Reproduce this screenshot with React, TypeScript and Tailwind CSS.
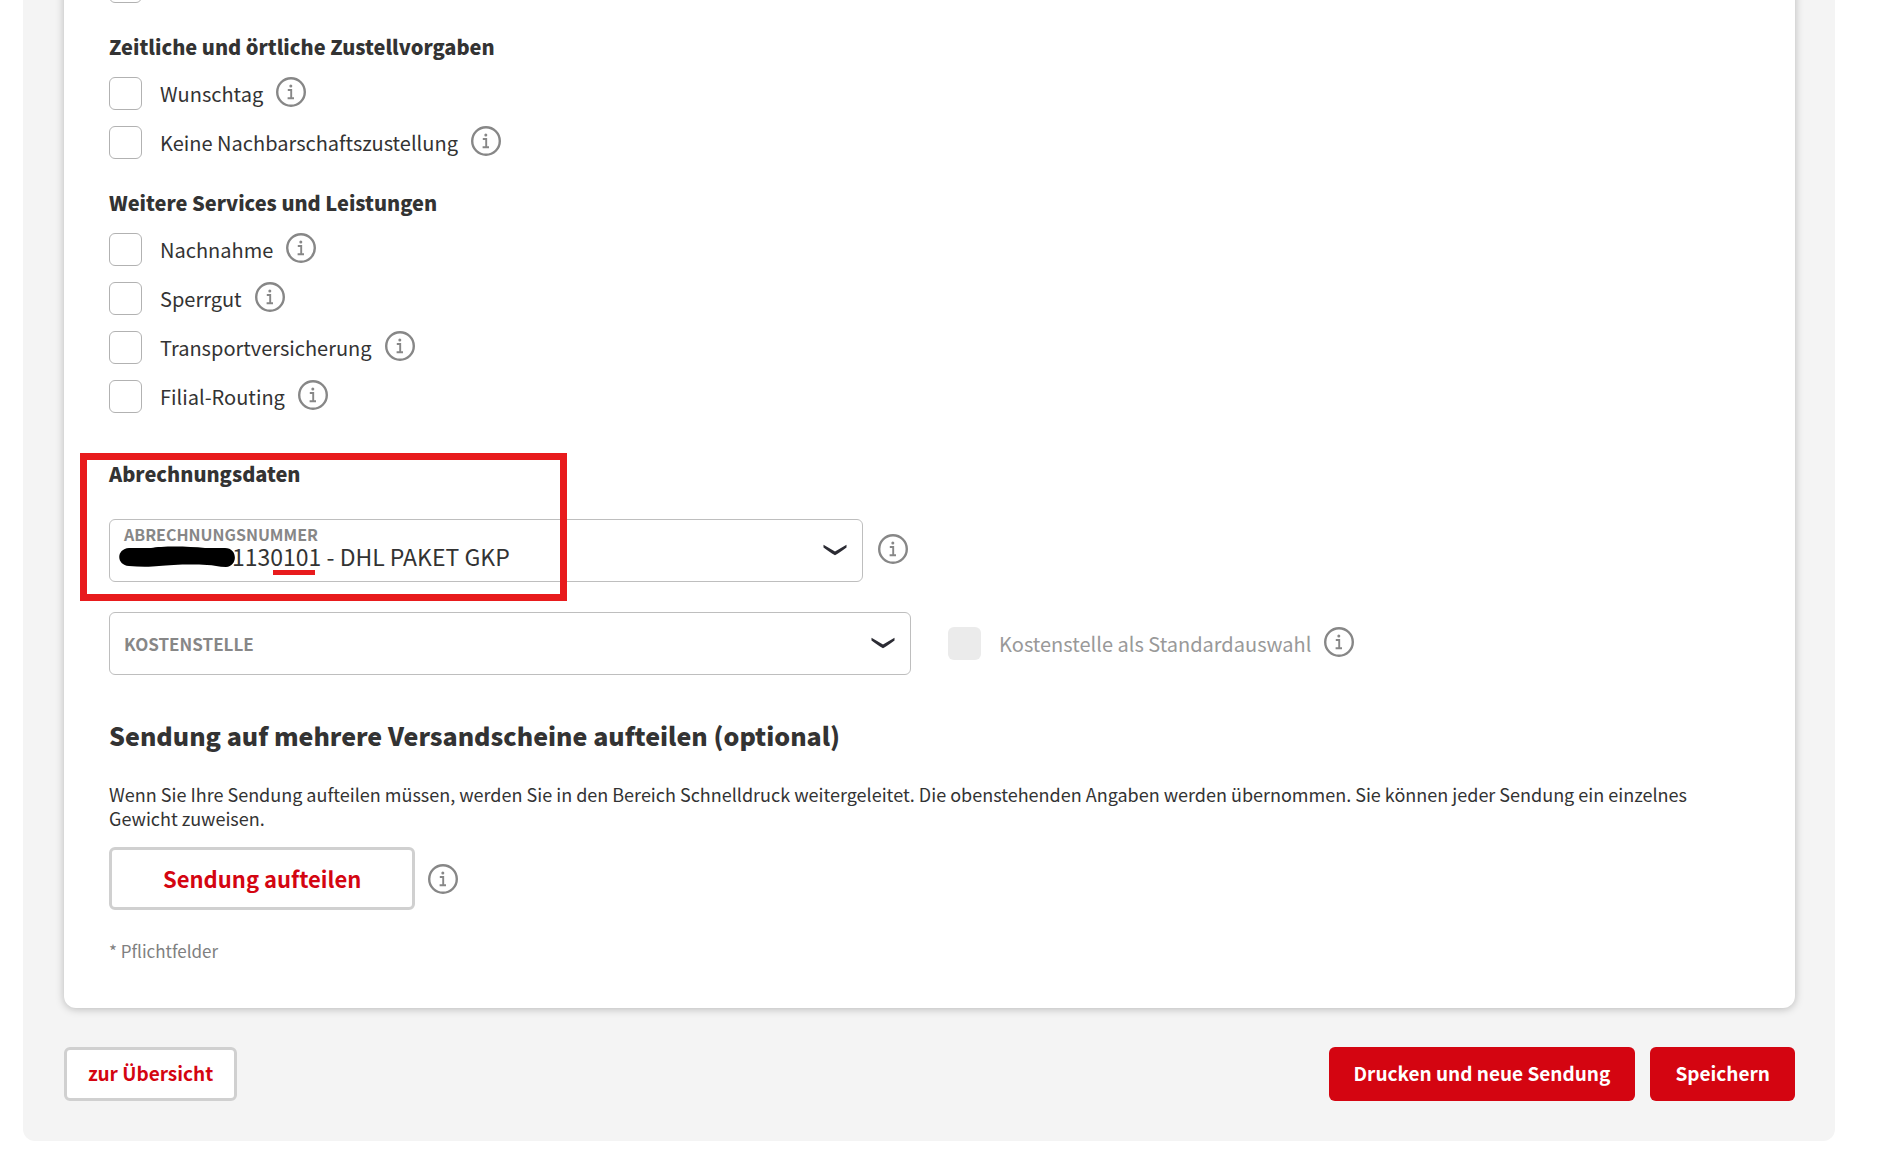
import React, { useId } from "react";

function InfoButton({ topic }: { topic: string }) {
  return (
    <button type="button" aria-label={"Information: " + topic} className="block size-[30px] shrink-0 text-[#878787]">
      <svg viewBox="0 0 30 30" className="block size-[30px]" fill="none">
        <circle cx="15" cy="15" r="13.8" stroke="currentColor" strokeWidth="2.4" />
        <circle cx="14.8" cy="9" r="1.5" fill="currentColor" />
        <path d="M11.800 13H15.2V21.200M11.600 21.200H18" stroke="currentColor" strokeWidth="1.9" />
      </svg>
    </button>
  );
}

function Chevron() {
  return (
    <svg
      viewBox="0 0 24 12"
      className="pointer-events-none absolute top-[25px] right-4 h-3 w-6"
      fill="#2b2b33"
    >
      <path d="M0.500 0.800L12 7.600L23.500 0.800V3.400C20 6.200 16 8.600 12 11.200C8 8.600 4 6.200 0.500 3.400Z" />
    </svg>
  );
}

function CheckRow({ label }: { label: string }) {
  const id = useId();
  return (
    <div className="flex h-[33px] items-start">
      <input
        id={id}
        type="checkbox"
        className="size-[33px] shrink-0 appearance-none rounded-[6px] border border-[#b2b2b2] bg-white"
      />
      <label htmlFor={id} className="pr-[13px] pl-[18px] text-[20px] leading-[33px]">
        {label}
      </label>
      <InfoButton topic={label} />
    </div>
  );
}

function ServiceGroup({ title, items }: { title: string; items: string[] }) {
  return (
    <section>
      <h3 className="text-[20px] leading-8 font-black">{title}</h3>
      <div className="mt-[14px] flex flex-col gap-4">
        {items.map((item) => (
          <CheckRow key={item} label={item} />
        ))}
      </div>
    </section>
  );
}

const selectClass =
  "block h-[63px] w-full appearance-none rounded-[6px] border border-[#bebebe] bg-white text-[23px] leading-7";

export default function App() {
  return (
    <div className="min-h-screen overflow-hidden bg-white pr-[62px] pl-[23px] font-['Noto_Sans_CJK_SC','Noto_Sans',sans-serif] text-[#333333]">
      <main className="-mt-[30px] rounded-b-xl bg-[#f4f4f4] pr-10 pb-10 pl-[41px]">
        <form onSubmit={(e) => e.preventDefault()}>
          <div className="rounded-b-xl bg-white px-[45px] pb-[45px] shadow-[0_1px_8px_rgba(0,0,0,0.25)]">
            <input
              type="checkbox"
              aria-label="Service"
              className="block size-[33px] appearance-none rounded-[6px] border border-[#b2b2b2] bg-white"
            />
            <div className="mt-7">
              <ServiceGroup
                title="Zeitliche und örtliche Zustellvorgaben"
                items={["Wunschtag", "Keine Nachbarschaftszustellung"]}
              />
            </div>
            <div className="mt-7">
              <ServiceGroup
                title="Weitere Services und Leistungen"
                items={["Nachnahme", "Sperrgut", "Transportversicherung", "Filial-Routing"]}
              />
            </div>

            <section className="relative mt-[45px]">
              <h3 className="text-[20px] leading-8 font-black">Abrechnungsdaten</h3>
              <div className="mt-[29px] grid grid-cols-2 gap-x-[37px] gap-y-[30px]">
                <div className="flex items-start gap-[15px] pr-[3px]">
                  <div className="relative grow">
                    <label
                      htmlFor="billing"
                      className="absolute top-[5px] left-[15px] text-[16px] leading-5 font-bold text-[#878787]"
                    >
                      ABRECHNUNGSNUMMER
                    </label>
                    <select id="billing" className={selectClass + " pt-[11px] pl-[122px]"}>
                      <option>1130101 - DHL PAKET GKP</option>
                    </select>
                    <Chevron />
                    <svg viewBox="0 0 117 22" className="pointer-events-none absolute top-[27px] left-[10px] h-[22px] w-[117px]">
                      <path
                        d="M10 2H32C42 0 68 0 86 2H106C119 2 119 20 107 21C100 21 94 19 88 19C70 18 52 19 40 20C32 21 20 21 10 20C-3 19 -3 3 10 2Z"
                        fill="#000000"
                      />
                    </svg>
                    <span className="pointer-events-none absolute top-[51px] left-[164px] h-[5px] w-[42px] bg-[#e81b1d]" />
                  </div>
                  <div className="pt-[15px]">
                    <InfoButton topic="Abrechnungsnummer" />
                  </div>
                </div>
                <div />
                <div className="relative">
                  <label
                    htmlFor="cost"
                    className="pointer-events-none absolute top-5 left-[15px] text-[17px] leading-6 font-bold text-[#878787]"
                  >
                    KOSTENSTELLE
                  </label>
                  <select id="cost" className={selectClass}>
                    <option></option>
                  </select>
                  <Chevron />
                </div>
                <div className="flex items-start pt-[15px]">
                  <input
                    id="default-cost"
                    type="checkbox"
                    disabled
                    className="size-[33px] shrink-0 appearance-none rounded-[6px] bg-[#ebebeb]"
                  />
                  <label htmlFor="default-cost" className="pr-[13px] pl-[18px] text-[20px] leading-[33px] text-[#999999]">
                    Kostenstelle als Standardauswahl
                  </label>
                  <InfoButton topic="Kostenstelle als Standardauswahl" />
                </div>
              </div>
              <div className="pointer-events-none absolute -top-[5px] -left-[29px] h-[148px] w-[487px] border-[7px] border-[#e81b1d]" />
            </section>

            <section className="mt-[42px]">
              <h2 className="text-[25px] leading-9 font-black">Sendung auf mehrere Versandscheine aufteilen (optional)</h2>
              <p className="mt-[29px] text-[18px] leading-6">
                Wenn Sie Ihre Sendung aufteilen müssen, werden Sie in den Bereich Schnelldruck weitergeleitet. Die
                obenstehenden Angaben werden übernommen. Sie können jeder Sendung ein einzelnes Gewicht zuweisen.
              </p>
              <div className="mt-[17px] flex items-center gap-[13px]">
                <button
                  type="button"
                  className="h-[63px] rounded-[6px] border-3 border-[#d0d0d0] bg-white px-[51px] pb-[2px] text-[22px] leading-8 font-bold text-[#d40511]"
                >
                  Sendung aufteilen
                </button>
                <InfoButton topic="Sendung aufteilen" />
              </div>
              <p className="mt-[29px] text-[17px] leading-6 text-[#808080]">* Pflichtfelder</p>
            </section>
          </div>

          <div className="mt-[39px] flex gap-[15px] text-[19px] leading-7 font-bold">
            <button type="button" className="mr-auto h-[54px] rounded-[6px] border-3 border-[#d0d0d0] bg-white px-[21px] pb-[2px] text-[#d40511]">
              zur Übersicht
            </button>
            <button type="submit" className="h-[54px] rounded-[6px] bg-[#d40511] px-[25px] pb-[2px] text-white">
              Drucken und neue Sendung
            </button>
            <button type="submit" className="h-[54px] rounded-[6px] bg-[#d40511] px-[25px] pb-[2px] text-white">
              Speichern
            </button>
          </div>
        </form>
      </main>
    </div>
  );
}
